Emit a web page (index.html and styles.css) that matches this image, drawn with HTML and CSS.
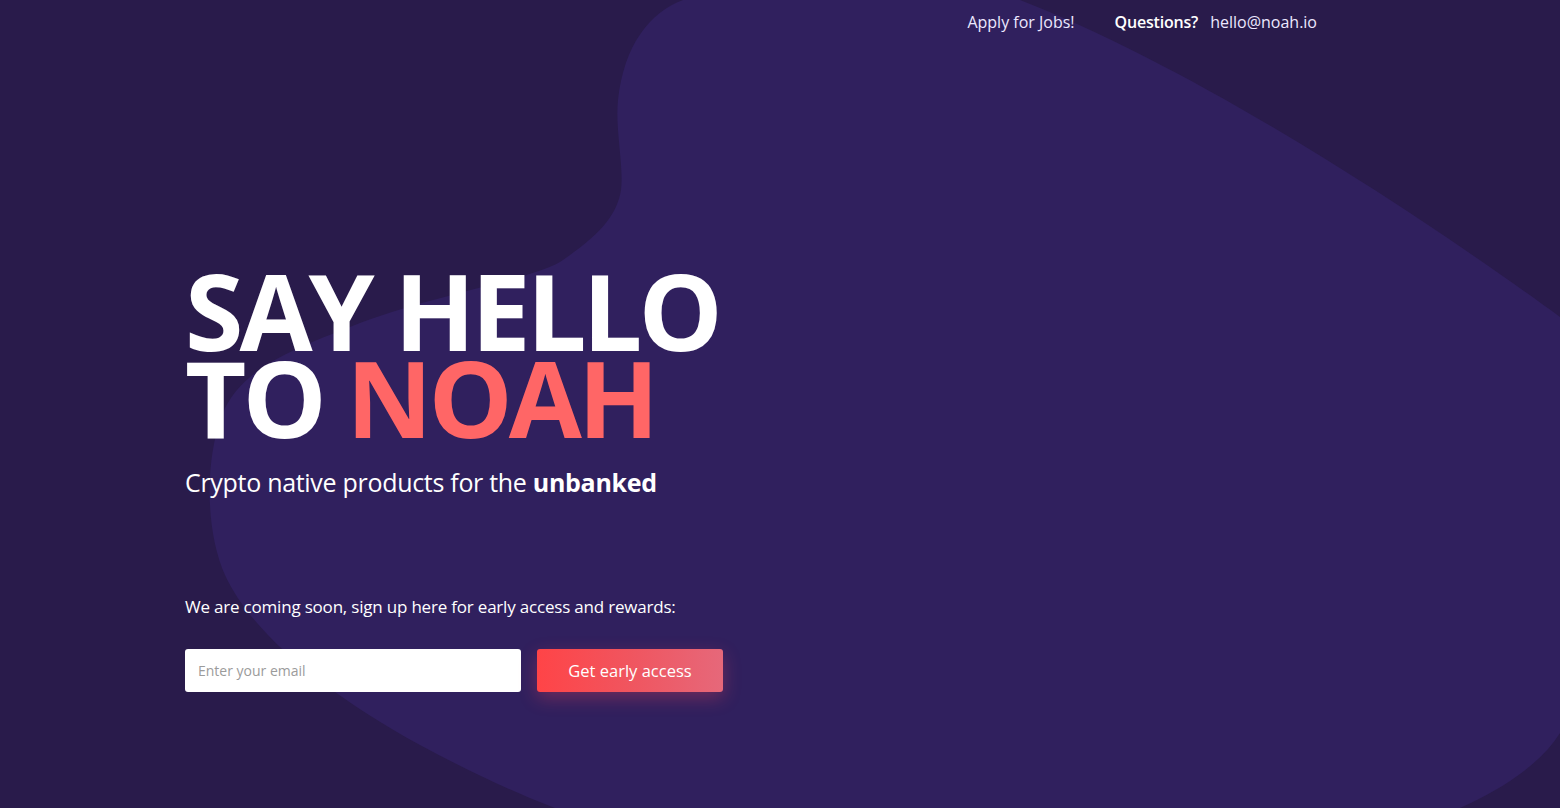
FILE: index.html
```html
<!DOCTYPE html>
<html lang="en">
<head>
<meta charset="utf-8">
<title>Noah</title>
<link rel="stylesheet" href="styles.css">
</head>
<body>
<div class="page">
  <svg class="blob" viewBox="0 0 1560 808" preserveAspectRatio="none" aria-hidden="true">
    <path d="M683,0 C650,12 624,45 618,100 C615,130 624,165 621,190 C617,215 600,235 560,262 C530,280 430,295 350,327 C290,350 240,370 222,415 C205,460 205,530 225,575 C250,630 320,690 420,745 C470,772 520,795 555,808 L1460,808 C1500,790 1540,765 1560,733 L1560,317 C1420,215 1200,70 1020,0 Z"/>
  </svg>
  <header class="nav">
    <a class="nav-link" href="#">Apply for Jobs!</a>
    <div class="contact">
      <span class="contact-label">Questions?</span>
      <a class="nav-link" href="#">hello@noah.io</a>
    </div>
  </header>
  <main class="hero">
    <h1 class="title"><span class="line">SAY HELLO</span><span class="line">TO <span class="accent">NOAH</span></span></h1>
    <p class="subtitle">Crypto native products for the <strong>unbanked</strong></p>
    <p class="signup-text">We are coming soon, sign up here for early access and rewards:</p>
    <form class="signup">
      <input class="email" type="email" placeholder="Enter your email">
      <button class="cta" type="button">Get early access</button>
    </form>
  </main>
</div>
</body>
</html>
```

FILE: styles.css
```css
* { box-sizing: border-box; }
html, body { margin: 0; padding: 0; }
body {
  background: #291b4b;
  font-family: "Open Sans", "Noto Sans", sans-serif;
  color: #ffffff;
  overflow: hidden;
}
.page {
  position: relative;
  width: 1560px;
  height: 808px;
  overflow: hidden;
}
.blob {
  position: absolute;
  left: 0;
  top: 0;
  width: 1560px;
  height: 808px;
  z-index: 0;
}
.blob path { fill: #30205e; }
.nav {
  position: relative;
  z-index: 1;
  display: flex;
  justify-content: flex-end;
  align-items: center;
  gap: 40px;
  padding: 10px 243px 0 0;
  height: 34px;
  font-size: 16px;
}
.nav-link {
  color: #ece8ff;
  text-decoration: none;
  letter-spacing: 0;
}
.contact { display: flex; gap: 12px; align-items: center; }
.contact-label { font-weight: 600; color: #ffffff; letter-spacing: -0.2px; }
.hero {
  position: relative;
  z-index: 1;
  padding: 0 0 0 185px;
  margin-top: 233px;
}
.title {
  margin: 0;
  font-size: 106px;
  line-height: 87px;
  font-weight: 700;
  letter-spacing: -4px;
  color: #ffffff;
}
.title .line { display: block; height: 87px; }
.accent { color: #ff6666; }
.subtitle {
  margin: 24px 0 0 0;
  font-size: 25px;
  line-height: 34px;
  letter-spacing: -0.3px;
}
.subtitle strong { font-weight: 700; }
.signup-text {
  margin: 97px 0 0 0;
  font-size: 17px;
  line-height: 22px;
  letter-spacing: -0.2px;
}
.signup {
  display: flex;
  gap: 16px;
  margin-top: 31px;
}
.email {
  width: 336px;
  height: 43px;
  border: none;
  border-radius: 3px;
  background: #ffffff;
  padding: 0 13px;
  font-family: inherit;
  font-size: 14px;
  color: #333;
  outline: none;
}
.email::placeholder { color: #9b9b9b; }
.cta {
  width: 186px;
  height: 43px;
  border: none;
  border-radius: 3px;
  background: linear-gradient(90deg, #ff4447 0%, #f0555f 50%, #e6687a 100%);
  color: #ffffff;
  font-family: inherit;
  font-size: 16.5px;
  box-shadow: 0 6px 18px rgba(255, 70, 90, 0.3);
  cursor: pointer;
}
```
